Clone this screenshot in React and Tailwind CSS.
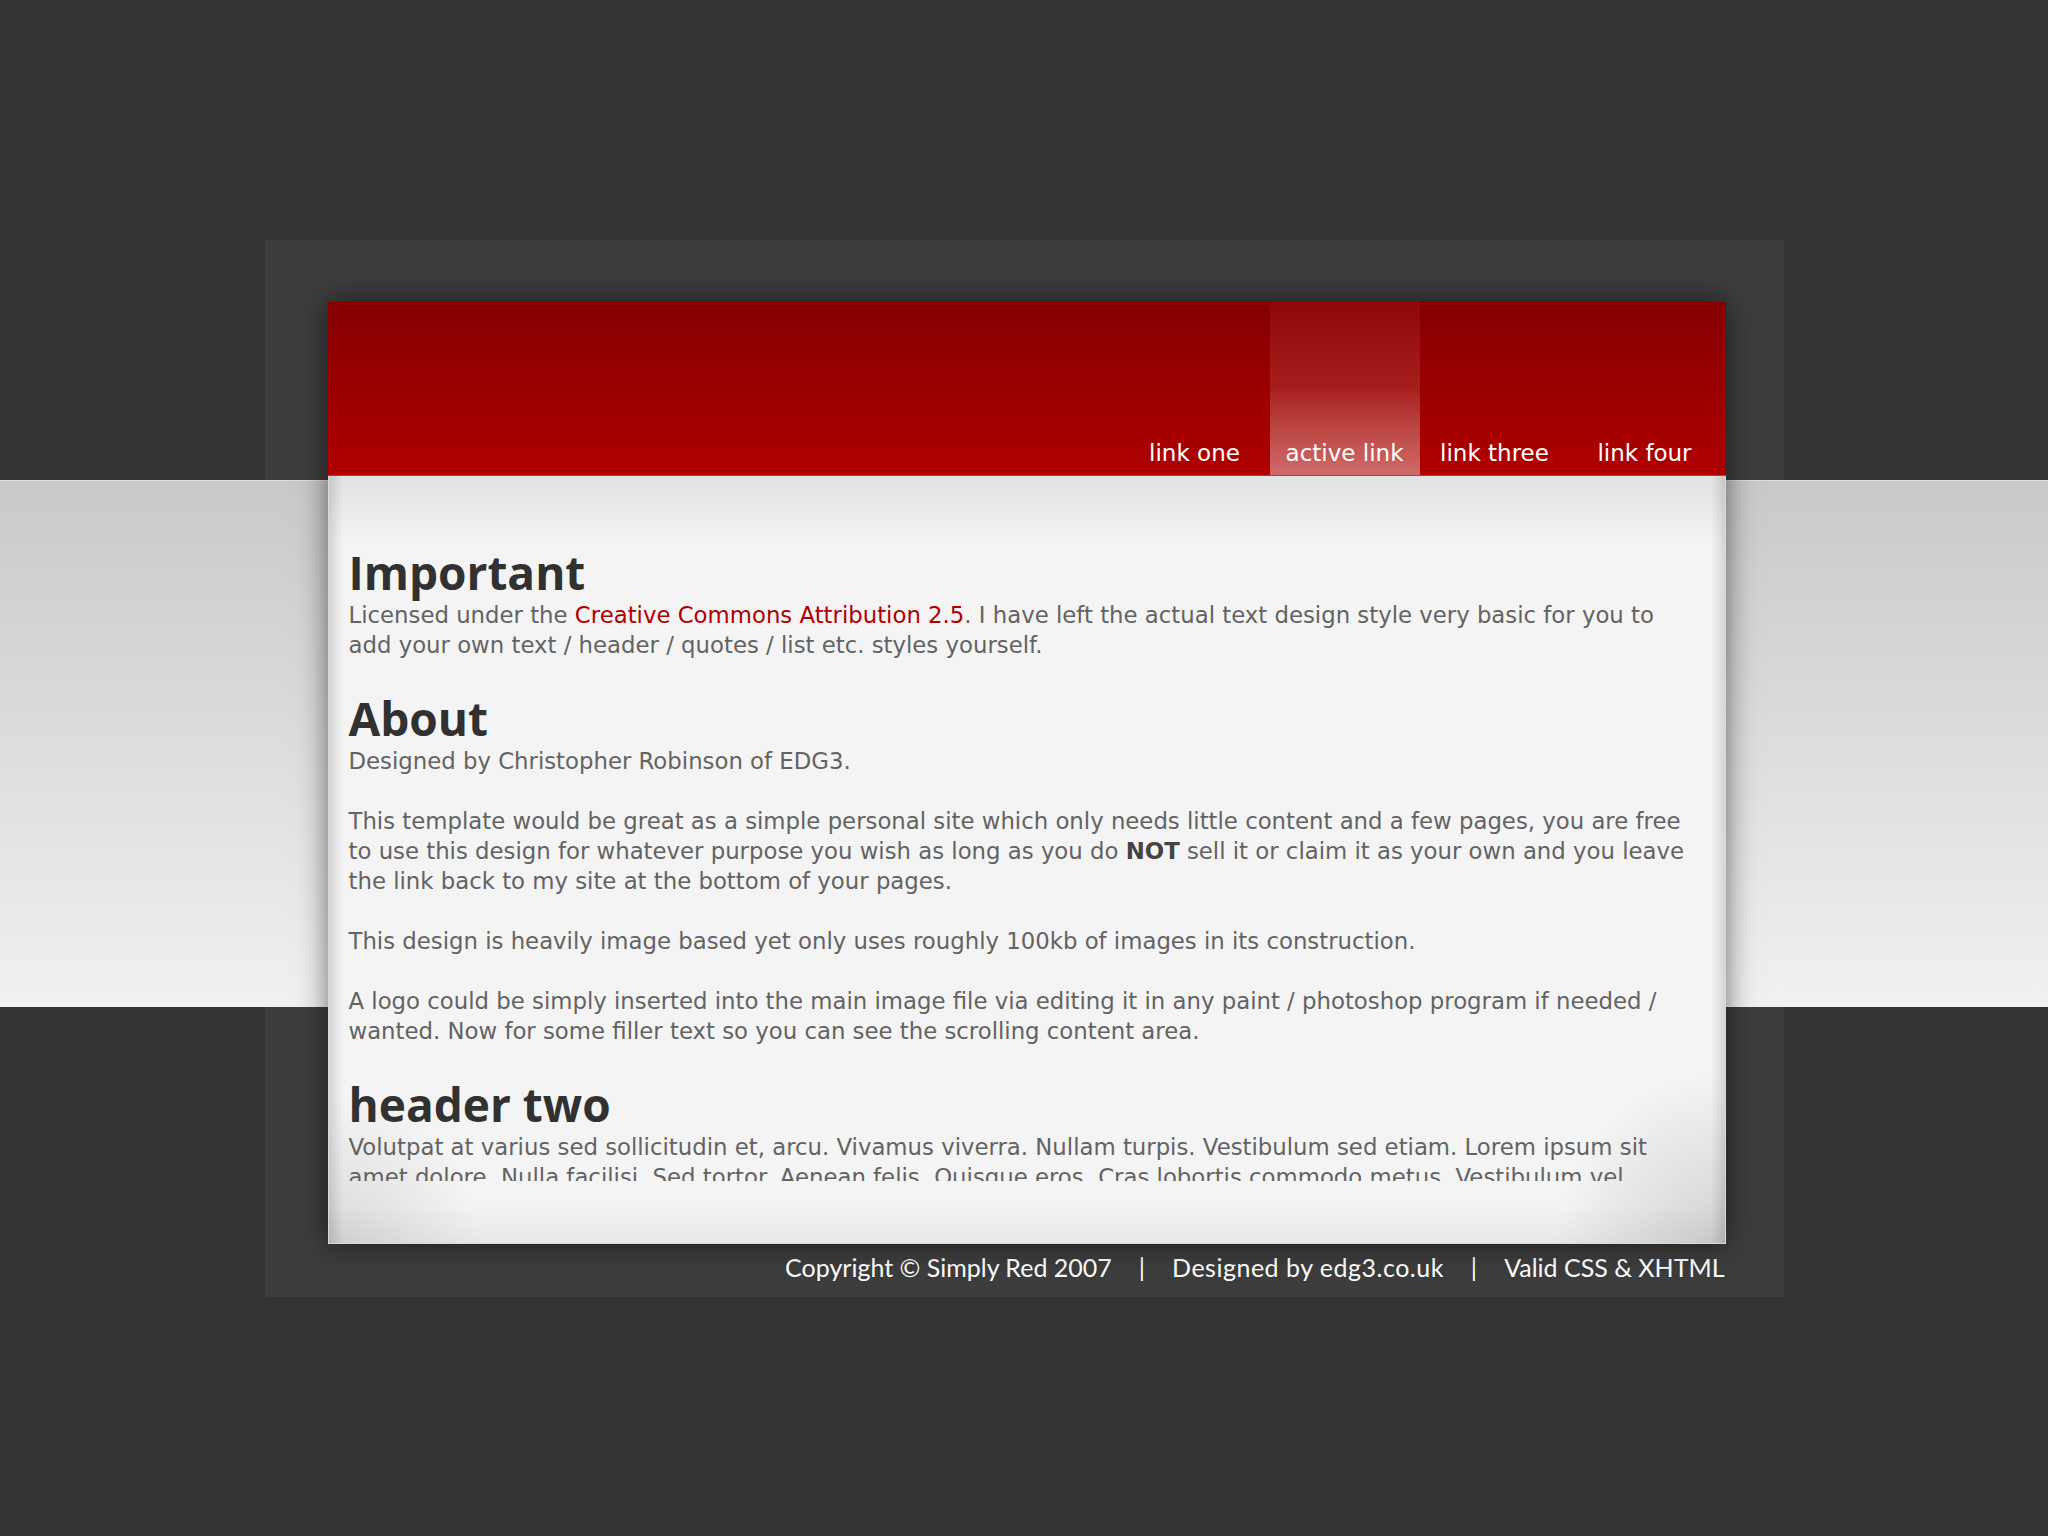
export default function App() {
  const navItems = [
    { label: 'link one', active: false },
    { label: 'active link', active: true },
    { label: 'link three', active: false },
    { label: 'link four', active: false },
  ];

  const heading = "mt-[30px] font-['Open_Sans',sans-serif] text-[46px] font-bold leading-[56px] text-[#313131]";

  return (
    <div className="relative min-h-[1536px] overflow-hidden bg-[#333333] font-['DejaVu_Sans',sans-serif]">
      {/* light band across the page */}
      <div className="absolute left-0 right-0 top-[480px] z-10 h-[527px] border-t border-[#dedede] bg-gradient-to-b from-[#c9c9c9] to-[#f1f1f1]" />

      <div className="flex justify-center pt-[240px]">
        <div className="h-[1057px] w-[1519px] bg-[#3d3d3d] pl-[63px] pt-[62px]">
          {/* main panel */}
          <div className="relative z-20 w-[1398px] shadow-[0_0_28px_rgba(0,0,0,0.55)]">
            {/* header */}
            <div className="flex h-[174px] items-stretch justify-end border-b border-[#b83a3a] bg-gradient-to-b from-[#860000] to-[#b00000] pr-[6px]">
              {navItems.map((item) => (
                <a
                  key={item.label}
                  href="#"
                  className={`flex w-[150px] flex-col justify-end pb-[7px] text-center text-[23px] leading-[30px] text-white ${
                    item.active ? 'bg-gradient-to-b from-[#8e0606] via-[#a81e1e] to-[#d06a6a]' : ''
                  }`}
                >
                  {item.label}
                </a>
              ))}
            </div>

            {/* content */}
            <div className="h-[768px] border border-t-0 border-[#d9d9d9] bg-[#f4f4f4] bg-[radial-gradient(circle_at_0%_100%,rgba(0,0,0,0.11),transparent_150px),radial-gradient(circle_at_100%_100%,rgba(0,0,0,0.14),transparent_170px),linear-gradient(to_bottom,rgba(0,0,0,0.07),transparent_70px),linear-gradient(to_top,rgba(0,0,0,0.05),transparent_40px),linear-gradient(to_right,rgba(0,0,0,0.13),transparent_14px,transparent_calc(100%-14px),rgba(0,0,0,0.13))]">
              <div className="h-[705px] overflow-hidden pl-[20px] pr-[30px] pt-[38px] text-[22.8px] leading-[30px] text-[#636363]">
                <h2 className={heading}>Important</h2>
                <p>
                  Licensed under the{' '}
                  <a href="#" className="text-[#b10000]">
                    Creative Commons Attribution 2.5
                  </a>
                  . I have left the actual text design style very basic for you to add your own text / header / quotes / list etc. styles yourself.
                </p>

                <h2 className={heading}>About</h2>
                <p>Designed by Christopher Robinson of EDG3.</p>
                <p className="mt-[30px]">
                  This template would be great as a simple personal site which only needs little content and a few pages, you are free to use this design for whatever purpose you wish as long as you do <strong className="text-[#444444]">NOT</strong> sell it or claim it as your own and you leave the link back to my site at the bottom of your pages.
                </p>
                <p className="mt-[30px]">This design is heavily image based yet only uses roughly 100kb of images in its construction.</p>
                <p className="mt-[30px]">
                  A logo could be simply inserted into the main image file via editing it in any paint / photoshop program if needed / wanted. Now for some filler text so you can see the scrolling content area.
                </p>

                <h2 className={heading}>header two</h2>
                <p>
                  Volutpat at varius sed sollicitudin et, arcu. Vivamus viverra. Nullam turpis. Vestibulum sed etiam. Lorem ipsum sit amet dolore. Nulla facilisi. Sed tortor. Aenean felis. Quisque eros. Cras lobortis commodo metus. Vestibulum vel purus. In eget odio in sapien adipiscing blandit. Quisque augue tortor, facilisis sit amet, aliquam, suscipit vitae, cursus sed, arcu lorem ipsum dolor sit amet.
                </p>
              </div>
            </div>
          </div>

          {/* footer */}
          <div className="mt-[8px] flex w-[1398px] justify-end pr-[1px] font-['Lato',sans-serif] text-[25px] leading-[30px] text-white">
            <span>Copyright © Simply Red 2007</span>
            <span className="mx-[27px]">|</span>
            <span className="tracking-[0.5px]">Designed by edg3.co.uk</span>
            <span className="mx-[27px]">|</span>
            <span>Valid CSS &amp; XHTML</span>
          </div>
        </div>
      </div>
    </div>
  );
}
